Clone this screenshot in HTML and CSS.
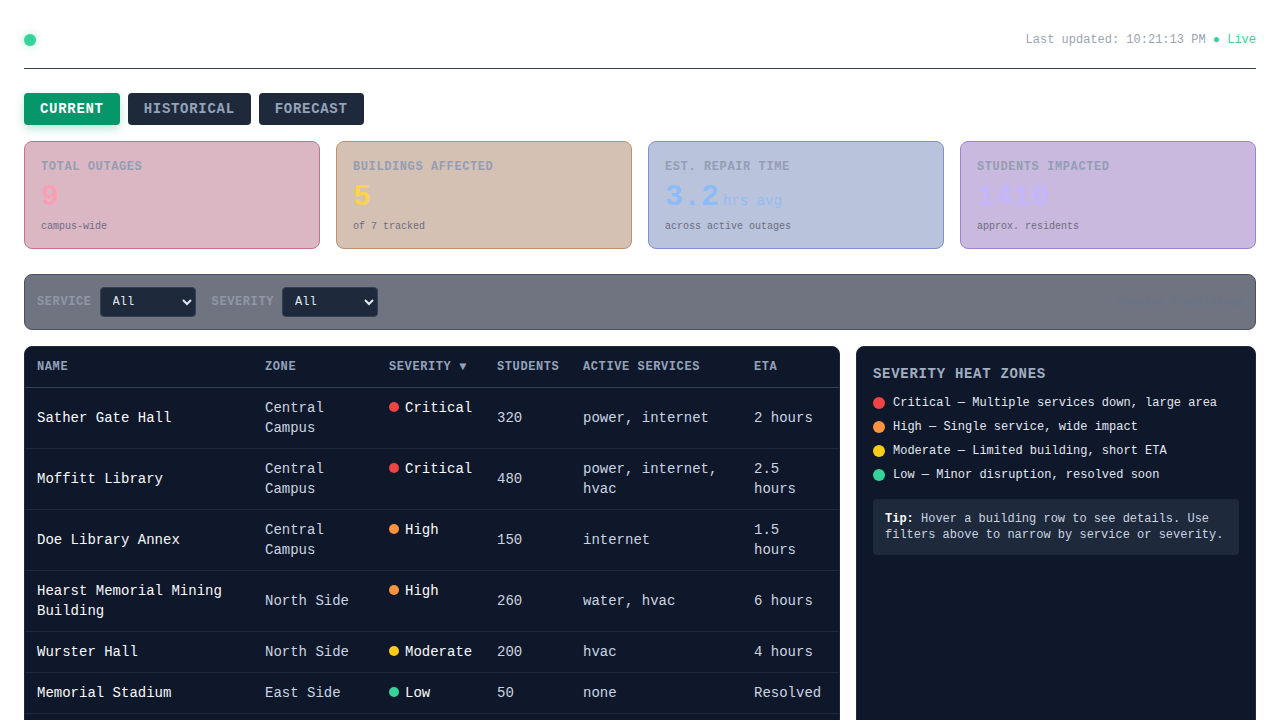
FILE: index.html
```html
<!DOCTYPE html>
<html lang="en">
<head>
    <meta charset="UTF-8">
    <meta name="viewport" content="width=device-width, initial-scale=1.0">
    <title>Campus Outage Monitor</title>
    <link rel="stylesheet" href="styles.css">
</head>
<body>
    <header class="topbar">
        <div class="brand"><span class="pulse"></span></div>
        <div class="updated">Last updated: 10:21:13 PM <span class="live">● Live</span></div>
    </header>

    <nav class="tabs">
        <button class="tab active">CURRENT</button>
        <button class="tab">HISTORICAL</button>
        <button class="tab">FORECAST</button>
    </nav>

    <section class="stats">
        <div class="stat stat-red">
            <div class="stat-label">TOTAL OUTAGES</div>
            <div class="stat-value">9</div>
            <div class="stat-sub">campus-wide</div>
        </div>
        <div class="stat stat-amber">
            <div class="stat-label">BUILDINGS AFFECTED</div>
            <div class="stat-value">5</div>
            <div class="stat-sub">of 7 tracked</div>
        </div>
        <div class="stat stat-blue">
            <div class="stat-label">EST. REPAIR TIME</div>
            <div class="stat-value">3.2<span class="stat-unit">hrs avg</span></div>
            <div class="stat-sub">across active outages</div>
        </div>
        <div class="stat stat-purple">
            <div class="stat-label">STUDENTS IMPACTED</div>
            <div class="stat-value">1410</div>
            <div class="stat-sub">approx. residents</div>
        </div>
    </section>

    <section class="filters">
        <label class="filter-label" for="service">SERVICE</label>
        <select id="service" class="filter-select">
            <option>All</option>
            <option>power</option>
            <option>internet</option>
            <option>water</option>
            <option>hvac</option>
        </select>
        <label class="filter-label" for="severity">SEVERITY</label>
        <select id="severity" class="filter-select">
            <option>All</option>
            <option>Critical</option>
            <option>High</option>
            <option>Moderate</option>
            <option>Low</option>
        </select>
        <span class="filter-count">Showing 7 buildings</span>
    </section>

    <main class="content">
        <div class="table-card">
            <table class="outages">
                <colgroup>
                    <col class="c-name">
                    <col class="c-zone">
                    <col class="c-sev">
                    <col class="c-stu">
                    <col class="c-svc">
                    <col class="c-eta">
                </colgroup>
                <thead>
                    <tr>
                        <th>NAME</th>
                        <th>ZONE</th>
                        <th>SEVERITY ▼</th>
                        <th>STUDENTS</th>
                        <th>ACTIVE SERVICES</th>
                        <th>ETA</th>
                    </tr>
                </thead>
                <tbody>
                    <tr>
                        <td class="name">Sather Gate Hall</td>
                        <td>Central Campus</td>
                        <td class="sev"><span class="dot critical"></span>Critical</td>
                        <td>320</td>
                        <td>power, internet</td>
                        <td>2 hours</td>
                    </tr>
                    <tr>
                        <td class="name">Moffitt Library</td>
                        <td>Central Campus</td>
                        <td class="sev"><span class="dot critical"></span>Critical</td>
                        <td>480</td>
                        <td>power, internet, hvac</td>
                        <td>2.5 hours</td>
                    </tr>
                    <tr>
                        <td class="name">Doe Library Annex</td>
                        <td>Central Campus</td>
                        <td class="sev"><span class="dot high"></span>High</td>
                        <td>150</td>
                        <td>internet</td>
                        <td>1.5 hours</td>
                    </tr>
                    <tr>
                        <td class="name">Hearst Memorial Mining Building</td>
                        <td>North Side</td>
                        <td class="sev"><span class="dot high"></span>High</td>
                        <td>260</td>
                        <td>water, hvac</td>
                        <td>6 hours</td>
                    </tr>
                    <tr>
                        <td class="name">Wurster Hall</td>
                        <td>North Side</td>
                        <td class="sev"><span class="dot moderate"></span>Moderate</td>
                        <td>200</td>
                        <td>hvac</td>
                        <td>4 hours</td>
                    </tr>
                    <tr>
                        <td class="name">Memorial Stadium</td>
                        <td>East Side</td>
                        <td class="sev"><span class="dot low"></span>Low</td>
                        <td>50</td>
                        <td>none</td>
                        <td>Resolved</td>
                    </tr>
                    <tr>
                        <td class="name">Evans Hall</td>
                        <td>East Side</td>
                        <td class="sev"><span class="dot low"></span>Low</td>
                        <td>0</td>
                        <td>none</td>
                        <td>Resolved</td>
                    </tr>
                </tbody>
            </table>
        </div>

        <aside class="side-card">
            <h3 class="side-title">SEVERITY HEAT ZONES</h3>
            <ul class="legend">
                <li><span class="ldot critical"></span>Critical — Multiple services down, large area</li>
                <li><span class="ldot high"></span>High — Single service, wide impact</li>
                <li><span class="ldot moderate"></span>Moderate — Limited building, short ETA</li>
                <li><span class="ldot low"></span>Low — Minor disruption, resolved soon</li>
            </ul>
            <div class="tip"><b>Tip:</b> Hover a building row to see details. Use filters above to narrow by service or severity.</div>
        </aside>
    </main>
</body>
</html>
```

FILE: styles.css
```css
* {
    box-sizing: border-box;
}
body {
    font-family: "Liberation Mono", "DejaVu Sans Mono", monospace;
    margin: 0;
    padding: 24px;
    background-color: #ffffff;
    color: #e2e8f0;
}

/* header */
.topbar {
    display: flex;
    align-items: center;
    justify-content: space-between;
    height: 45px;
    padding-bottom: 12px;
    border-bottom: 1px solid #374151;
}
.brand {
    display: flex;
    align-items: center;
}
.pulse {
    width: 12px;
    height: 12px;
    border-radius: 50%;
    background: #34d399;
    box-shadow: 0 0 8px rgba(52, 211, 153, 0.4);
}
.updated {
    font-size: 12px;
    color: #9ca3af;
}
.live {
    color: #34d399;
}

/* tabs */
.tabs {
    display: flex;
    gap: 8px;
    margin-top: 24px;
}
.tab {
    font-family: inherit;
    font-size: 14px;
    font-weight: bold;
    letter-spacing: 0.05em;
    height: 32px;
    padding: 0 16px;
    border: none;
    border-radius: 4px;
    background: #1e293b;
    color: #94a3b8;
    cursor: pointer;
}
.tab.active {
    background: #059669;
    color: #ffffff;
    box-shadow: 0 4px 10px rgba(5, 150, 105, 0.25);
}

/* stat cards */
.stats {
    display: grid;
    grid-template-columns: repeat(4, 1fr);
    gap: 16px;
    margin-top: 16px;
}
.stat {
    height: 108px;
    padding: 17px 16px 15px;
    border: 1px solid;
    border-radius: 8px;
}
.stat-red {
    background: #dbb7c4;
    border-color: #c4718f;
}
.stat-amber {
    background: #d4c1b3;
    border-color: #c08f6c;
}
.stat-blue {
    background: #b9c3dc;
    border-color: #8090d0;
}
.stat-purple {
    background: #c9b9de;
    border-color: #a180cf;
}
.stat-label {
    font-size: 12px;
    line-height: 16px;
    font-weight: bold;
    letter-spacing: 0.05em;
    color: #949db3;
}
.stat-value {
    margin-top: 4px;
    font-size: 30px;
    line-height: 36px;
    font-weight: bold;
}
.stat-red .stat-value { color: #fa9fb3; }
.stat-amber .stat-value { color: #fcd34d; }
.stat-blue .stat-value { color: #8cbcf8; }
.stat-purple .stat-value { color: #c4b5fd; }
.stat-unit {
    font-size: 14px;
    line-height: 1;
    font-weight: normal;
    margin-left: 4px;
    opacity: 0.8;
}
.stat-sub {
    margin-top: 6px;
    font-size: 10px;
    line-height: 12px;
    color: #6b6e80;
}

/* filters */
.filters {
    display: flex;
    align-items: center;
    margin-top: 25px;
    padding: 12px;
    background: #6f7480;
    border: 1px solid #4b5160;
    border-radius: 8px;
}
.filter-label {
    font-size: 12px;
    font-weight: bold;
    letter-spacing: 0.05em;
    color: #8f97a8;
    margin-right: 8px;
}
.filter-select {
    font-family: inherit;
    font-size: 12px;
    width: 96px;
    height: 30px;
    padding: 0 8px;
    margin-right: 16px;
    background: #1e293b;
    color: #e2e8f0;
    border: 1px solid #334155;
    border-radius: 4px;
}
.filter-count {
    margin-left: auto;
    font-size: 11px;
    color: #68738a;
}

/* main area */
.content {
    display: grid;
    grid-template-columns: 816px 1fr;
    gap: 16px;
    margin-top: 16px;
    align-items: start;
}
.table-card,
.side-card {
    background: #0f172a;
    border: 1px solid #1e293b;
    border-radius: 8px;
}
.table-card {
    overflow: hidden;
}
.outages {
    width: 100%;
    border-collapse: collapse;
    table-layout: fixed;
    font-size: 14px;
    line-height: 20px;
}
.c-name { width: 228px; }
.c-zone { width: 124px; }
.c-sev { width: 108px; }
.c-stu { width: 86px; }
.c-svc { width: 171px; }
.c-eta { width: 97px; }
.outages th {
    text-align: left;
    font-size: 12px;
    font-weight: bold;
    letter-spacing: 0.05em;
    color: #94a3b8;
    height: 40px;
    padding: 0 12px;
    border-bottom: 1px solid #334155;
}
.outages td {
    padding: 10px 12px;
    color: #cbd5e1;
    vertical-align: middle;
    border-bottom: 1px solid #1e293b;
}
.outages td.name {
    color: #f8fafc;
}
.outages td.sev {
    vertical-align: top;
    color: #f8fafc;
    white-space: nowrap;
}
.dot {
    display: inline-block;
    width: 10px;
    height: 10px;
    border-radius: 50%;
    margin-right: 6px;
}
.critical { background: #ef4444; }
.high { background: #fb923c; }
.moderate { background: #facc15; }
.low { background: #34d399; }

/* side legend */
.side-card {
    padding: 17px 16px 16px;
    min-height: 400px;
}
.side-title {
    margin: 0;
    font-size: 14px;
    line-height: 20px;
    letter-spacing: 0.05em;
    color: #a0aec0;
}
.legend {
    list-style: none;
    margin: 11px 0 0;
    padding: 0;
}
.legend li {
    display: flex;
    align-items: center;
    font-size: 12px;
    line-height: 16px;
    margin-bottom: 8px;
    color: #e2e8f0;
}
.ldot {
    width: 12px;
    height: 12px;
    border-radius: 50%;
    margin-right: 8px;
    flex-shrink: 0;
}
.tip {
    margin-top: 16px;
    padding: 12px;
    background: #1e293b;
    border-radius: 4px;
    font-size: 12px;
    line-height: 16px;
    color: #cbd5e1;
}
.tip b {
    color: #f8fafc;
}
```
